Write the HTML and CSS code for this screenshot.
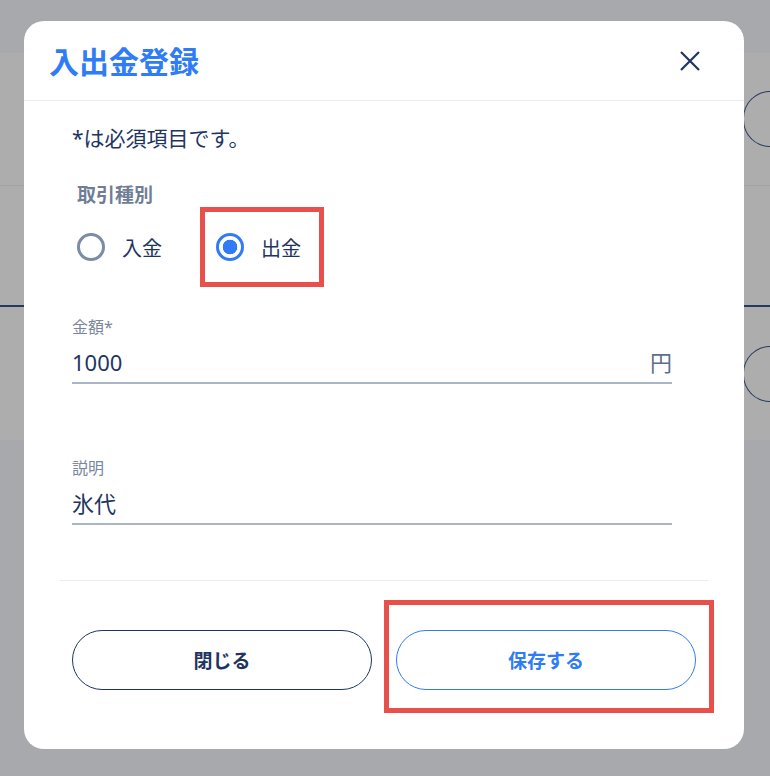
FILE: index.html
```html
<!DOCTYPE html>
<html lang="ja">
<head>
  <meta charset="UTF-8">
  <meta name="viewport" content="width=device-width, initial-scale=1.0">
  <title>入出金登録</title>
  <link rel="stylesheet" href="styles.css">
</head>
<body>
  <!-- Page behind the dialog -->
  <div class="page">
    <div class="page-header"></div>
    <div class="page-list">
      <div class="list-row list-row--first"><span class="row-button"></span></div>
      <div class="list-row list-row--second"></div>
      <div class="list-row list-row--third"><span class="row-button"></span></div>
    </div>
  </div>

  <!-- Dialog -->
  <div class="modal">
    <div class="modal-header">
      <h2 class="modal-title">入出金登録</h2>
      <button class="close-button" type="button" aria-label="閉じる">
        <svg width="20" height="20" viewBox="0 0 20 20">
          <path d="M1 1 L19 19 M19 1 L1 19" stroke="#1e3562" stroke-width="2.2" fill="none"/>
        </svg>
      </button>
    </div>

    <form class="modal-body">
      <p class="required-note">*は必須項目です。</p>

      <!-- Transaction type -->
      <div class="type-group">
        <p class="group-label">取引種別</p>
        <div class="radio-row">
          <label class="radio-option">
            <input class="radio-input" type="radio" name="type" value="in">
            <span>入金</span>
          </label>
          <label class="radio-option radio-option--marked">
            <input class="radio-input" type="radio" name="type" value="out" checked>
            <span>出金</span>
          </label>
        </div>
      </div>

      <!-- Amount -->
      <div class="field field--amount">
        <label class="field-label" for="amount">金額*</label>
        <div class="field-control">
          <input class="field-input" type="text" id="amount" value="1000">
          <span class="field-suffix">円</span>
        </div>
      </div>

      <!-- Description -->
      <div class="field field--desc">
        <label class="field-label" for="desc">説明</label>
        <div class="field-control">
          <input class="field-input" type="text" id="desc" value="氷代">
        </div>
      </div>
    </form>

    <div class="modal-footer">
      <button class="pill-button pill-button--close" type="button">閉じる</button>
      <div class="marked-wrap">
        <button class="pill-button pill-button--save" type="button">保存する</button>
      </div>
    </div>
  </div>
</body>
</html>
```

FILE: styles.css
```css
/* General Reset */
body, h2, p, form, input, button {
  margin: 0;
  padding: 0;
  font-family: "Noto Sans", "Noto Sans CJK JP", sans-serif;
}

body {
  background-color: #a8a9ad;
  color: #1e3562;
  overflow: hidden;
  height: 776px;
  position: relative;
}

/* Page behind the dialog */
.page-header {
  height: 53px;
}

.page-list {
  background-color: #adadad;
}

.list-row {
  display: flex;
  align-items: center;
}

.list-row--first {
  height: 132px;
  border-bottom: 1px solid #a3a3a4;
}

.list-row--second {
  height: 119px;
  border-bottom: 2px solid #26395f;
}

.list-row--third {
  height: 133px;
}

/* only the left end of these buttons is inside the window */
.row-button {
  margin-left: 743px;
  width: 27px;
  height: 56px;
  border: 1.5px solid #26395f;
  border-right: none;
  border-radius: 30px 0 0 30px;
  box-sizing: border-box;
  flex-shrink: 0;
}

/* Dialog */
.modal {
  position: absolute;
  top: 21px;
  left: 24px;
  width: 720px;
  height: 728px;
  background-color: #fff;
  border-radius: 20px;
  display: flex;
  flex-direction: column;
}

.modal-header {
  height: 79px;
  border-bottom: 1px solid #efeaee;
  display: flex;
  align-items: center;
  justify-content: space-between;
  padding: 0 44px 0 25px;
}

.modal-title {
  color: #2f7cf6;
  font-size: 30px;
  font-weight: bold;
  line-height: 40px;
  padding-top: 2px;
}

.close-button {
  background: none;
  border: none;
  width: 20px;
  height: 20px;
  display: flex;
  cursor: pointer;
}

.modal-body {
  flex: 1;
  padding: 22px 72px 0 48px;
}

.required-note {
  font-size: 21px;
  line-height: 30px;
  color: #1e3562;
}

.group-label {
  margin-top: 28px;
  padding-left: 5px;
  font-size: 19px;
  line-height: 28px;
  font-weight: bold;
  color: #6f7d95;
}

.radio-row {
  display: flex;
  gap: 54px;
  margin-top: 24px;
  padding-left: 5px;
}

.radio-option {
  display: flex;
  align-items: center;
  gap: 17px;
  height: 28px;
  font-size: 20px;
  color: #1e3562;
}

.radio-input {
  appearance: none;
  -webkit-appearance: none;
  width: 28px;
  height: 28px;
  margin: 0;
  border: 3px solid #7d8ca5;
  border-radius: 50%;
  box-sizing: border-box;
  background-color: #fff;
}

.radio-input:checked {
  border-color: #2f7cf6;
  background: radial-gradient(circle, #2f7cf6 0, #2f7cf6 7px, #fff 7.6px);
}

/* Red annotation frames */
.radio-option--marked,
.marked-wrap {
  position: relative;
}

.radio-option--marked::after,
.marked-wrap::after {
  content: "";
  position: absolute;
  border: 5px solid #e8504c;
  pointer-events: none;
}

.radio-option--marked::after {
  top: -26px;
  bottom: -26px;
  left: -16px;
  right: -23px;
}

.marked-wrap::after {
  top: -30px;
  bottom: -23px;
  left: -12px;
  right: -18px;
}

/* Text fields */
.field {
  max-width: 600px;
}

.field--amount {
  margin-top: 56px;
}

.field--desc {
  margin-top: 74px;
}

.field-label {
  display: block;
  font-size: 16px;
  line-height: 20px;
  color: #7a879b;
}

.field-control {
  display: flex;
  align-items: center;
  margin-top: 10px;
  padding-bottom: 5px;
  border-bottom: 2px solid #aab5c8;
}

.field-input {
  flex: 1;
  min-width: 0;
  border: none;
  outline: none;
  background: none;
  font-size: 22px;
  line-height: 30px;
  height: 30px;
  color: #1e3562;
}

.field-suffix {
  font-size: 22px;
  line-height: 30px;
  color: #5f6f8a;
}

/* Footer */
.modal-footer {
  margin: 0 36px;
  padding: 49px 12px 59px;
  border-top: 1px solid #ececee;
  display: flex;
  gap: 24px;
}

.pill-button {
  width: 300px;
  height: 60px;
  border-radius: 30px;
  background-color: #fff;
  font-size: 19px;
  font-weight: bold;
  cursor: pointer;
}

.pill-button--close {
  border: 1.5px solid #1e3562;
  color: #1e3562;
}

.pill-button--save {
  border: 1.5px solid #2f7cf6;
  color: #2f7cf6;
}
```
